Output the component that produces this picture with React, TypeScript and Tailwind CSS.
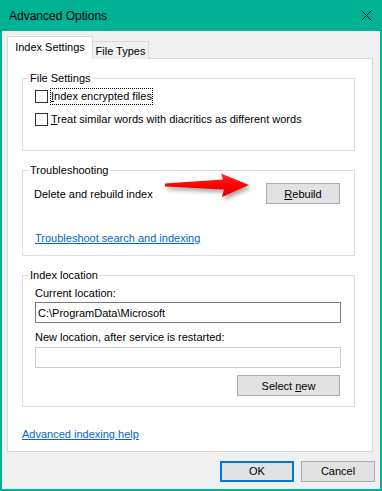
import React from "react";

const font = { fontFamily: '"Segoe UI", "Liberation Sans", Arial, sans-serif' };

function Group({ title, className, children }: { title: string; className?: string; children: React.ReactNode }) {
  return (
    <fieldset className={`ml-[14px] w-[333px] border border-[#dcdcdc] ${className ?? ""}`}>
      <legend className="ml-[5px] px-[2px] text-[11px] leading-[16px] text-black">{title}</legend>
      <div className="pl-[12px] pr-[13px]">{children}</div>
    </fieldset>
  );
}

function Button({ children, primary, className }: { children: React.ReactNode; primary?: boolean; className?: string }) {
  return (
    <div
      className={`flex h-[21px] w-[74px] items-center justify-center bg-[#e1e1e1] text-[11px] text-black ${
        primary ? "border-2 border-[#0078d7]" : "border border-[#adadad]"
      } ${className ?? ""}`}
    >
      {children}
    </div>
  );
}

function Checkbox() {
  return <div className="h-[13px] w-[13px] shrink-0 border border-[#333333] bg-white" />;
}

export default function App() {
  return (
    <div className="flex h-[491px] w-[382px] flex-col bg-[#00b294] px-[2px] pb-[2px]" style={font}>
      {/* title bar */}
      <div className="-mx-[2px] flex h-[31px] items-center justify-between pl-[9px] pr-[10px]">
        <span className="text-[12px] leading-[16px] text-black">Advanced Options</span>
        <svg width="11" height="11" viewBox="0 0 11 11" className="mt-[-1px]">
          <path d="M0.5 0.5 L10.5 10.5 M10.5 0.5 L0.5 10.5" stroke="#000" strokeWidth="1" />
        </svg>
      </div>

      {/* body */}
      <div className="flex flex-1 flex-col bg-[#f0f0f0]">
        {/* tabs */}
        <div className="relative z-10 -mb-px mt-[5px] ml-[5px] flex items-end">
          <div className="flex h-[23px] w-[86px] justify-center border-x border-t border-[#d9d9d9] bg-white pt-[2px] text-[11px] leading-[16px] text-black">
            Index Settings
          </div>
          <div className="flex h-[18px] w-[56px] justify-center border-r border-t border-[#d9d9d9] bg-[#f0f0f0] pt-[1px] text-[11px] leading-[16px] text-black">
            File Types
          </div>
        </div>

        {/* panel */}
        <div className="ml-[5px] flex h-[394px] w-[366px] flex-col border border-[#d9d9d9] bg-white pt-[11px] text-[11px] leading-[16px] text-black">
          <Group title="File Settings" className="pb-[22px]">
            <div className="mt-[2px] flex h-[17px] items-center">
              <Checkbox />
              <span className="ml-[2px] border border-dotted border-black px-0 leading-[15px]">
                <u className="underline-offset-1">I</u>ndex encrypted files
              </span>
            </div>
            <div className="mt-[6px] flex h-[17px] items-center">
              <Checkbox />
              <span className="ml-[2px] border border-transparent leading-[15px]">
                <u className="underline-offset-1">T</u>reat similar words with diacritics as different words
              </span>
            </div>
          </Group>

          <Group title="Troubleshooting" className="mt-[11px] pb-[9px]">
            <div className="relative mt-[5px] flex h-[21px] items-center justify-between">
              <span className="-ml-px">Delete and rebuild index</span>
              <svg
                width="95"
                height="32"
                viewBox="0 0 95 32"
                className="absolute left-[128px] top-[-13px] drop-shadow-[2px_3px_2px_rgba(0,0,0,0.35)]"
              >
                <defs>
                  <linearGradient id="arrowRed" x1="0" y1="0" x2="0" y2="1">
                    <stop offset="0" stopColor="#ff2a2a" />
                    <stop offset="0.5" stopColor="#ff0000" />
                    <stop offset="1" stopColor="#e00000" />
                  </linearGradient>
                </defs>
                <polygon
                  points="2,13.5 60,9.5 58,3.5 86,15 59,27 61,19.5 2,16.5"
                  fill="url(#arrowRed)"
                />
              </svg>
              <Button className="mr-px w-[73px]">
                <span>
                  <u className="underline-offset-1">R</u>ebuild
                </span>
              </Button>
            </div>
            <div className="mt-[26px]">
              <span className="text-[#0066cc] underline underline-offset-1">Troubleshoot search and indexing</span>
            </div>
          </Group>

          <Group title="Index location" className="mt-[11px] pb-[10px]">
            <div className="mt-[2px]">Current location:</div>
            <div className="mt-px flex h-[21px] items-center border border-[#7a7a7a] pl-[2px]">
              C:\ProgramData\Microsoft
            </div>
            <div className="mt-[6px]">New location, after service is restarted:</div>
            <div className="mt-[2px] h-[21px] border border-[#cccccc]" />
            <div className="mt-[7px] flex justify-end">
              <Button className="mr-px w-[103px]">
                <span>
                  Select <u className="underline-offset-1">n</u>ew
                </span>
              </Button>
            </div>
          </Group>

          <div className="ml-[14px] mt-[19px]">
            <span className="text-[#0066cc] underline underline-offset-1">Advanced indexing help</span>
          </div>
        </div>

        {/* dialog buttons */}
        <div className="mr-[5px] mt-[9px] flex justify-end gap-[7px]">
          <Button primary>OK</Button>
          <Button>Cancel</Button>
        </div>
      </div>
    </div>
  );
}
